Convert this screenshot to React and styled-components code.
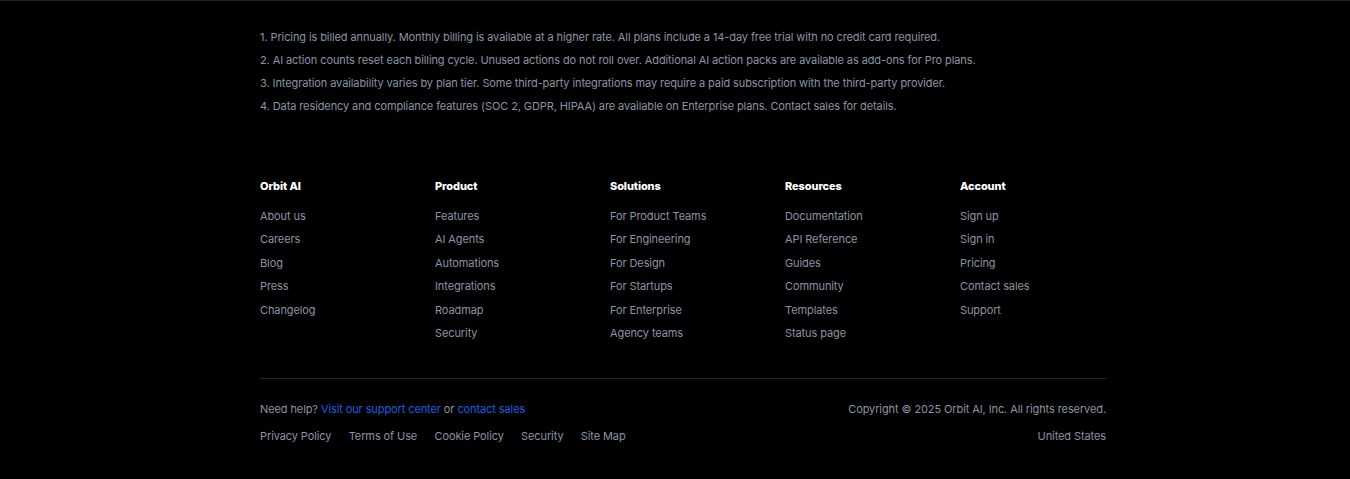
import React from 'react';
import styled, { createGlobalStyle } from 'styled-components';

const GlobalStyle = createGlobalStyle`
  body {
    margin: 0;
    background: #000;
    font-family: Inter, "Liberation Sans", sans-serif;
    letter-spacing: -0.1px;
  }
`;

const Footer = styled.footer`
  background: #000;
  border-top: 1px solid #232323;
  min-height: 478px;
`;

const Inner = styled.div`
  width: 846px;
  margin-left: calc(50% - 415px);
  padding-top: 27px;
`;

const Notes = styled.ol`
  list-style: none;
  margin: 0;
  padding: 0;
  display: flex;
  flex-direction: column;
  gap: 5px;
`;

const Note = styled.li`
  font-size: 11px;
  line-height: 18px;
  color: #8b94a3;
`;

const Columns = styled.div`
  display: grid;
  grid-template-columns: repeat(5, 146px);
  column-gap: 29px;
  margin-top: 62px;
`;

const Column = styled.div`
  display: flex;
  flex-direction: column;
`;

const Heading = styled.h4`
  margin: 0 0 12px;
  font-size: 11px;
  line-height: 18px;
  font-weight: 800;
  color: #fff;
`;

const LinkList = styled.ul`
  list-style: none;
  margin: 0;
  padding: 0;
  display: flex;
  flex-direction: column;
  gap: 5.4px;
`;

const Item = styled.li`
  display: block;
  font-size: 11px;
  line-height: 18px;
`;

const FooterLink = styled.a`
  font-size: 11px;
  line-height: 18px;
  color: #8b94a3;
  text-decoration: none;
`;

const Divider = styled.hr`
  border: none;
  border-top: 1px solid #262626;
  margin: 36px 0 0;
`;

const Bottom = styled.div`
  display: flex;
  justify-content: space-between;
  padding-top: 21px;
`;

const Side = styled.div`
  display: flex;
  flex-direction: column;
  align-items: ${p => (p.$right ? 'flex-end' : 'flex-start')};
  gap: 9px;
`;

const Small = styled.p`
  margin: 0;
  font-size: 11px;
  line-height: 18px;
  color: #8b94a3;
`;

const Accent = styled.a`
  color: #1d5fe0;
  text-decoration: none;
`;

const Legal = styled.div`
  display: flex;
  gap: 17.3px;
  line-height: 18px;
`;

const notes = [
  'Pricing is billed annually. Monthly billing is available at a higher rate. All plans include a 14-day free trial with no credit card required.',
  'AI action counts reset each billing cycle. Unused actions do not roll over. Additional AI action packs are available as add-ons for Pro plans.',
  'Integration availability varies by plan tier. Some third-party integrations may require a paid subscription with the third-party provider.',
  'Data residency and compliance features (SOC 2, GDPR, HIPAA) are available on Enterprise plans. Contact sales for details.',
];

const columns = [
  { title: 'Orbit AI', links: ['About us', 'Careers', 'Blog', 'Press', 'Changelog'] },
  { title: 'Product', links: ['Features', 'AI Agents', 'Automations', 'Integrations', 'Roadmap', 'Security'] },
  { title: 'Solutions', links: ['For Product Teams', 'For Engineering', 'For Design', 'For Startups', 'For Enterprise', 'Agency teams'] },
  { title: 'Resources', links: ['Documentation', 'API Reference', 'Guides', 'Community', 'Templates', 'Status page'] },
  { title: 'Account', links: ['Sign up', 'Sign in', 'Pricing', 'Contact sales', 'Support'] },
];

const legal = ['Privacy Policy', 'Terms of Use', 'Cookie Policy', 'Security', 'Site Map'];

const App = () => (
  <>
    <GlobalStyle />
    <Footer>
      <Inner>
        <Notes>
          {notes.map((n, i) => (
            <Note key={i}>{i + 1}. {n}</Note>
          ))}
        </Notes>

        <Columns>
          {columns.map(col => (
            <Column key={col.title}>
              <Heading>{col.title}</Heading>
              <LinkList>
                {col.links.map(l => (
                  <Item key={l}>
                    <FooterLink href="#">{l}</FooterLink>
                  </Item>
                ))}
              </LinkList>
            </Column>
          ))}
        </Columns>

        <Divider />

        <Bottom>
          <Side>
            <Small>
              Need help? <Accent href="#">Visit our support center</Accent> or{' '}
              <Accent href="#">contact sales</Accent>
            </Small>
            <Legal>
              {legal.map(l => (
                <FooterLink key={l} href="#">{l}</FooterLink>
              ))}
            </Legal>
          </Side>
          <Side $right>
            <Small>Copyright © 2025 Orbit AI, Inc. All rights reserved.</Small>
            <Small>United States</Small>
          </Side>
        </Bottom>
      </Inner>
    </Footer>
  </>
);

export default App;
